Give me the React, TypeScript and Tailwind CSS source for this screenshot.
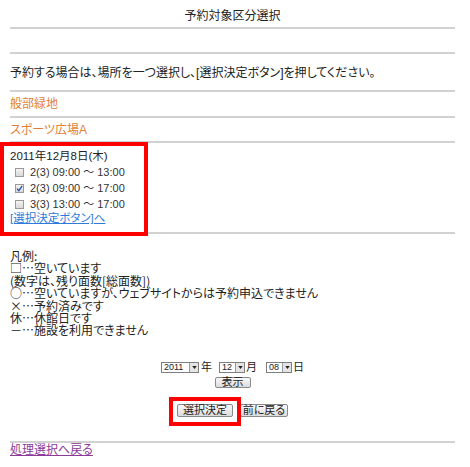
import React from "react";

const Hr = () => <div className="h-[2px] bg-[#d2d2d2]" />;

const CheckBox = ({ checked }: { checked?: boolean }) => (
  <span className="relative inline-block w-[9px] h-[9px] border border-[#9a9a9a] bg-gradient-to-b from-[#f4f4f4] to-[#d8d8d8]">
    {checked && (
      <svg viewBox="0 0 9 9" className="absolute -left-[1px] -top-[1px] w-[9px] h-[9px]">
        <path d="M2 4.6 L3.8 6.6 L7.2 1.8" fill="none" stroke="#2a4ea8" strokeWidth="1.3" />
      </svg>
    )}
  </span>
);

const FakeSelect = ({ value, width }: { value: string; width: string }) => (
  <span className={`inline-flex items-center h-[11px] border border-[#7f7f7f] bg-white ${width}`}>
    <span className="flex-1 pl-[2px] text-[9px] leading-none text-[#222]">{value}</span>
    <span className="flex items-center justify-center w-[9px] h-[9px] border-l border-[#9a9a9a] bg-[#e4e4e4]">
      <svg viewBox="0 0 6 4" className="w-[5px] h-[3px]">
        <path d="M0 0 L6 0 L3 4 Z" fill="#222" />
      </svg>
    </span>
  </span>
);

const Btn = ({ label, className = "" }: { label: string; className?: string }) => (
  <button
    type="button"
    className={`flex items-center justify-center border border-[#8a8a8a] rounded-[2px] bg-gradient-to-b from-[#fafafa] to-[#dcdcdc] text-[11px] leading-none text-[#222] ${className}`}
  >
    {label}
  </button>
);

const slots = [
  { label: "2(3) 09:00 〜 13:00", checked: false },
  { label: "2(3) 09:00 〜 17:00", checked: true },
  { label: "3(3) 13:00 〜 17:00", checked: false },
];

const legend = [
  "凡例:",
  "□…空いています",
  "(数字は、残り面数[総面数])",
  "○…空いていますが、ウェブサイトからは予約申込できません",
  "×…予約済みです",
  "休…休館日です",
  "－…施設を利用できません",
];

export default function App() {
  return (
    <div className="w-[470px] h-[467px] bg-white overflow-hidden text-[#222] font-['Liberation_Sans','Noto_Sans_CJK_JP',sans-serif] [font-feature-settings:'palt']">
      <div className="w-[455px] pl-[10px]">
        {/* Title */}
        <div className="h-[27px] flex items-center justify-center pt-[4px] text-[12px]">予約対象区分選択</div>
        <Hr />
        <div className="h-[23px]" />
        <Hr />
        <div className="h-[36px] flex items-center pt-[1px] text-[12px]">
          予約する場合は、場所を一つ選択し、[選択決定ボタン]を押してください。
        </div>
        <Hr />
        <div className="h-[24px] flex items-center text-[12px] text-[#e27f34]">般部緑地</div>
        <Hr />
        <div className="h-[23px] flex items-center text-[12px] text-[#e27f34]">スポーツ広場A</div>
        <Hr />

        {/* Date / slots */}
        <div className="relative pt-[7px] pb-[6px]">
          <div className="h-[14px] flex items-center text-[11.5px]">2011年12月8日(木)</div>
          {slots.map((s) => (
            <div key={s.label} className="h-[16px] flex items-center gap-[6px] pl-[5px] text-[11px] text-[#333]">
              <CheckBox checked={s.checked} />
              <span>{s.label}</span>
            </div>
          ))}
          <div className="h-[14px] flex items-center">
            <a href="#" className="text-[11.5px] text-[#2f7bd9] underline">[選択決定ボタン]へ</a>
          </div>
          <div className="absolute -left-[10px] -top-[1px] w-[148px] h-[94px] border-4 border-[#ff0000] z-10 pointer-events-none" />
        </div>
        <Hr />

        {/* Legend */}
        <div className="pt-[16px] text-[12px] leading-[12.4px] font-['Noto_Sans_CJK_JP',sans-serif]">
          {legend.map((l) => (
            <div key={l}>{l}</div>
          ))}
        </div>

        {/* Date pickers */}
        <div className="mt-[25px] flex flex-col items-center">
          <div className="flex items-center text-[11px] leading-none">
            <FakeSelect value="2011" width="w-[38px]" />
            <span className="ml-[2px] mr-[7px]">年</span>
            <FakeSelect value="12" width="w-[26px]" />
            <span className="ml-[1px] mr-[9px]">月</span>
            <FakeSelect value="08" width="w-[26px]" />
            <span className="ml-[1px]">日</span>
          </div>
          <Btn label="表示" className="mt-[4px] w-[36px] h-[11px] text-[10px]" />
          <div className="mt-[16px] flex items-center gap-[7px]">
            <div className="relative">
              <Btn label="選択決定" className="w-[56px] h-[13px]" />
              <div className="absolute -left-[8px] -right-[8px] -top-[7px] -bottom-[9px] border-4 border-[#ff0000] pointer-events-none" />
            </div>
            <Btn label="前に戻る" className="w-[48px] h-[13px]" />
          </div>
        </div>

        <div className="mt-[24px]">
          <Hr />
        </div>
        <div className="h-[14px] flex items-center">
          <a href="#" className="text-[12px] text-[#8b3a9a] underline">処理選択へ戻る</a>
        </div>
      </div>
    </div>
  );
}
